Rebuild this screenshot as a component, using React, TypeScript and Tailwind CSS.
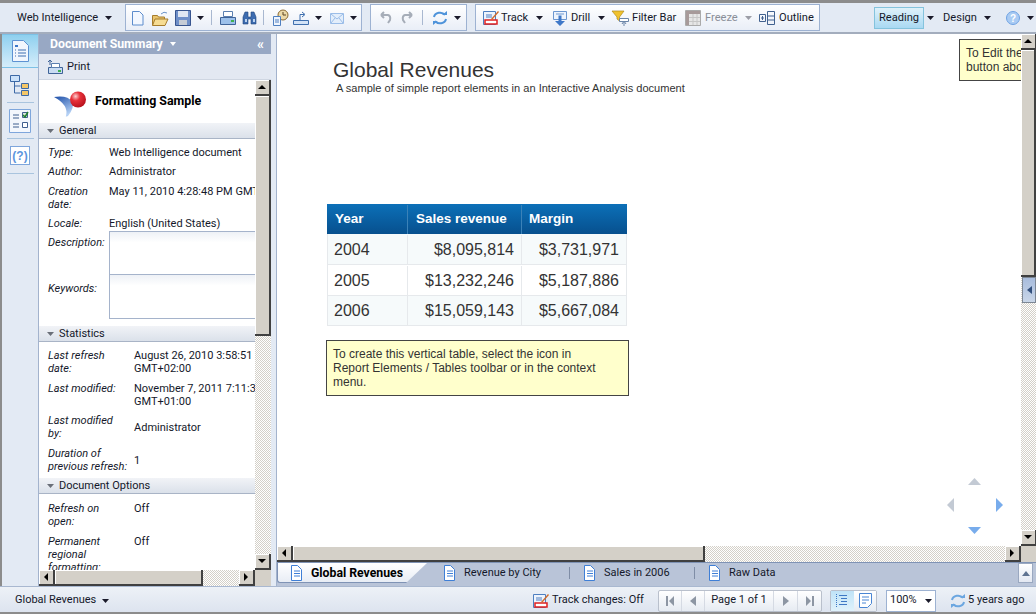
import type { ReactNode } from "react";

const Caret = ({ className = "mx-1" }: { className?: string }) => (
  <svg width="7" height="4" viewBox="0 0 7 4" className={`shrink-0 ${className}`}>
    <path d="M0 0h7L3.500 4z" fill="#1a1a2a" />
  </svg>
);

const Ico = ({ children, w = 18 }: { children: ReactNode; w?: number }) => (
  <svg width={w} height="18" viewBox={`0 0 ${w} 18`} className="shrink-0">
    {children}
  </svg>
);

const Gap = ({ className }: { className: string }) => <span className={`shrink-0 ${className}`} />;

const Sep = () => <div className="mx-[5px] h-[15px] w-px shrink-0 bg-[#a9b8d0]" />;

const DocIcon = () => (
  <Ico w={14}>
    <path d="M2.500 1.500h6l4 4v11h-10z" fill="#fff" stroke="#3f7fd6" />
    <path d="M5 7h6M5 9.500h6M5 12h6" stroke="#3f7fd6" />
  </Ico>
);

const TrackIcon = () => (
  <Ico>
    <path d="M1.500 2.500h12v13h-12z" fill="#eef4fd" stroke="#4e7fc0" />
    <path d="M4 6h6M4 8h6" stroke="#4e7fc0" />
    <path d="M3 11h12v4H3z" fill="#fff" stroke="#e02020" strokeWidth="1.500" />
    <path d="M9 10l7-8 1 1-7 8z" fill="#d06a2a" />
  </Ico>
);

const RefreshIcon = ({ color }: { color: string }) => (
  <Ico>
    <path d="M3 8a6 5 0 0 1 11-2M15 10a6 5 0 0 1-11 2" stroke={color} strokeWidth="2" fill="none" />
    <path d="M11 6h5V2zM7 12H2v4z" fill={color} />
  </Ico>
);

const Btn = ({ icon, label, gap, w, muted }: { icon: ReactNode; label: string; gap: string; w: string; muted?: boolean }) => (
  <div className={`flex shrink-0 items-center ${gap} ${muted ? "text-[#8a8f98]" : "text-[#14182a]"}`}>
    {icon}
    <span className={`whitespace-nowrap pt-px ${w}`}>{label}</span>
  </div>
);

const Toolbar = () => (
  <div className="flex h-[34px] shrink-0 items-center whitespace-nowrap border-t-[3px] border-b-2 border-t-[#8c8c8c] border-b-[#a3adbd] bg-[#e3eaf4] pl-[17px] text-[11.1px] text-[#14182a]">
    <span className="w-[82px] pt-px">Web Intelligence</span>
    <Caret className="ml-[6px] mr-[13px]" />
    <div className="flex h-[27px] w-[237px] shrink-0 items-center border border-[#9db2d2] bg-gradient-to-b from-white to-[#e9eef7] pl-[5px]">
      <Ico w={16}>
        <path d="M1.500 2.500h7l3.500 3.500v10h-10.500z" fill="#f2f7ff" stroke="#5c8ccc" />
      </Ico>
      <Gap className="w-[4px]" />
      <Ico>
        <path d="M1.500 6.500h5l1 1.500h6v8h-12z" fill="#e9c46d" stroke="#a67c2c" />
        <path d="M4 10h13l-3 6.500H1.500z" fill="#f6dc93" stroke="#a67c2c" />
        <path d="M10 5q3-3 6-1" stroke="#6b93c9" fill="none" />
      </Ico>
      <Gap className="w-[6px]" />
      <Ico w={16}>
        <path d="M.500 1.500h15v15h-15z" fill="#6f8fc8" stroke="#38558f" />
        <path d="M3 2h10v6H3z" fill="#dfe6f2" />
        <path d="M4 11h8v5H4z" fill="#c6ccd6" />
      </Ico>
      <Caret className="ml-[6px] mr-[2px]" />
      <Sep />
      <Gap className="w-[2px]" />
      <Ico>
        <path d="M4.500 2.500h9v5h-9z" fill="#fff" stroke="#5b7fb0" />
        <path d="M1.500 8.500h15v7h-15z" fill="#9cc0ea" stroke="#3f6398" />
        <path d="M12 11h3v2h-3z" fill="#3fb04f" />
      </Ico>
      <Gap className="w-[5px]" />
      <Ico w={15}>
        <path d="M1 8l2-5h3v5h3V3h3l2 5v7H9V10H6v5H1z" fill="#3d6cb0" stroke="#24477c" strokeWidth=".6" />
        <path d="M3 10h2v3H3zM11 10h2v3h-2z" fill="#b9d2f0" />
      </Ico>
      <Gap className="w-[1px]" />
      <Sep />
      <Gap className="w-[2px]" />
      <Ico>
        <circle cx="12" cy="6" r="5" fill="#ecd9a8" stroke="#8a6a33" />
        <path d="M12 3v3h3" stroke="#5a4520" fill="none" />
        <path d="M2.500 7.500h7v9h-7z" fill="#eef4fd" stroke="#4e7fc0" />
        <path d="M4 11h4M4 13h4" stroke="#4e7fc0" />
      </Ico>
      <Gap className="w-[3px]" />
      <Ico>
        <path d="M1.500 11.500h15v4h-15z" fill="#d3e3f7" stroke="#3f6fae" />
        <path d="M8 11V5.500h4M10 3l3 2.500L10 8" stroke="#3f6fae" fill="none" />
      </Ico>
      <Caret className="ml-[5px] mr-[6px]" />
      <Ico>
        <path d="M2.500 4.500h13v10h-13z" fill="#e3eefb" stroke="#9bbde8" />
        <path d="M3 5l6 5 6-5M3 14l4-5M15 14l-4-5" stroke="#9bbde8" fill="none" />
      </Ico>
      <Caret className="ml-[4px]" />
    </div>
    <div className="ml-[8px] flex h-[27px] w-[97px] shrink-0 items-center border border-[#9db2d2] bg-gradient-to-b from-white to-[#e9eef7] pl-[6px]">
      <Ico w={16}>
        <path d="M4 6h7q3 1 2 5l-2 3M4 6l3-3M4 6l3 3" stroke="#a6adb8" strokeWidth="2" fill="none" />
      </Ico>
      <Gap className="w-[7px]" />
      <Ico w={16}>
        <path d="M12 6H5q-3 1-2 5l2 3M12 6L9 3M12 6L9 9" stroke="#a6adb8" strokeWidth="2" fill="none" />
      </Ico>
      <Gap className="w-[1px]" />
      <Sep />
      <Gap className="w-[3px]" />
      <RefreshIcon color="#4e93da" />
      <Caret className="ml-[5px]" />
    </div>
    <div className="ml-[8px] flex h-[27px] w-[345px] shrink-0 items-center border border-[#9db2d2] bg-gradient-to-b from-white to-[#e9eef7] pl-[6px]">
      <Btn label="Track" gap="gap-[1px]" w="w-[28px]" icon={<TrackIcon />} />
      <Caret className="ml-[7px] mr-[9px]" />
      <Btn
        label="Drill"
        gap="gap-[1px]"
        w="w-[20px]"
        icon={
          <Ico>
            <path d="M1.500 2.500h13v8h-13z" fill="#eef4fd" stroke="#6c97d0" />
            <path d="M4 5h8" stroke="#6c97d0" />
            <path d="M6.500 6.500h3V12H13l-5 5-5-5h3.500z" fill="#3f78c8" />
          </Ico>
        }
      />
      <Caret className="ml-[7px] mr-[6px]" />
      <Btn
        label="Filter Bar"
        gap="gap-[3px]"
        w="w-[45px]"
        icon={
          <Ico>
            <path d="M1 2h12L8.500 8v4L6 10V8z" fill="#f0c22e" stroke="#b0891a" strokeWidth=".7" />
            <path d="M8.500 9.500h9v3h-9z" fill="#fff" stroke="#6b85a8" />
            <path d="M13 12v5M11 15l2-3 2 3" stroke="#6b85a8" fill="none" />
          </Ico>
        }
      />
      <Gap className="w-[8px]" />
      <Btn
        muted
        label="Freeze"
        gap="gap-[4px]"
        w="w-[33px]"
        icon={
          <Ico w={16}>
            <path d="M.500 1.500h15v15H.500z" fill="#e6e6e6" stroke="#aaa" />
            <path d="M1 2h14v3H1zM1 2h3v14H1z" fill="#a79a9a" />
            <path d="M4 8.500h11M4 12.500h11M8 5v11M12 5v11" stroke="#c6c6c6" />
          </Ico>
        }
      />
      <Caret className="ml-[7px] mr-[7px] opacity-40" />
      <Btn
        label="Outline"
        gap="gap-[2px]"
        w="w-[35px]"
        icon={
          <Ico>
            <path d="M.500 5.500h6v7h-6zM8.500 2.500h7v13h-7zM8.500 7h7M8.500 11h7M3.500 7v4M2 9h3" stroke="#41618f" fill="none" />
          </Ico>
        }
      />
    </div>
    <div className="ml-[54px] flex h-[22px] w-[50px] shrink-0 items-center justify-center border border-[#84c3dd] bg-gradient-to-b from-[#dff1fa] to-[#a9d9f2] pt-px">
      Reading
    </div>
    <Caret className="ml-[3px] mr-[9px]" />
    <span className="w-[33px] pt-px">Design</span>
    <Caret className="ml-[8px] mr-[15px]" />
    <svg width="14" height="14" viewBox="0 0 14 14" className="shrink-0">
      <circle cx="7" cy="7" r="6.500" fill="#a9cbf3" stroke="#6fa2e2" />
      <text x="7" y="11" textAnchor="middle" fontSize="10" fontWeight="bold" fill="#fff" fontFamily="Liberation Sans">?</text>
    </svg>
    <Caret className="ml-[7px]" />
  </div>
);

const Rail = () => (
  <div className="flex w-[39px] shrink-0 flex-col items-center border-l-2 border-l-[#8c8c8c] border-r border-r-[#a3b3cd] bg-[#e3eaf4]">
    <div className="flex h-[34px] w-full items-center justify-center border-y border-[#7cc1e6] bg-gradient-to-b from-[#8ed0ef] to-[#d5edfa]">
      <svg width="17" height="22" viewBox="0 0 17 22">
        <path d="M.500 .500h11l5 5v16H.500z" fill="#f1f6fd" stroke="#5d92d2" />
        <path d="M3 5h3v2H3z" fill="#3d78c8" />
        <path d="M3 10h1M6 10h8M3 13h1M6 13h8M3 16h1M6 16h8" stroke="#3d6fb0" />
      </svg>
    </div>
    <svg width="20" height="22" viewBox="0 0 20 22" className="mt-[7px]">
      <path d="M.500 .500h9v6h-9z" fill="#cbe2fa" stroke="#3c69a6" />
      <path d="M4.500 7v11h6M4.500 11h6" stroke="#3c69a6" fill="none" />
      <path d="M11.500 8.500h7v5h-7zM11.500 15.500h7v5h-7z" fill="#f4c768" stroke="#3c69a6" />
    </svg>
    <div className="mb-[6px] mt-[5px] h-px w-[27px] bg-[#a9c4de]" />
    <svg width="22" height="24" viewBox="0 0 22 24">
      <path d="M.500 .500h21v23H.500z" fill="#f3f7fd" stroke="#7ea6dc" />
      <path d="M4 6h6M4 9h6M4 15h6M4 18h6" stroke="#3f5f8f" />
      <path d="M13.500 3.500h5v5h-5z" fill="#d8e6d8" stroke="#3f5f8f" />
      <path d="M14 6l2 2 3-5" stroke="#1f7f2f" strokeWidth="1.500" fill="none" />
      <path d="M13.500 13.500h5v5h-5z" fill="#fff" stroke="#3f5f8f" />
    </svg>
    <div className="mb-[7px] mt-[5px] h-px w-[27px] bg-[#a9c4de]" />
    <div className="flex h-[19px] w-[20px] items-center justify-center border border-[#7ea6dc] bg-white font-['Liberation_Sans',sans-serif] text-[12px] font-bold text-[#5b95dd]">
      (?)
    </div>
    <div className="mt-[8px] h-px w-[27px] bg-[#a9c4de]" />
  </div>
);

const ScrollBtn = ({ dir }: { dir: "up" | "down" | "left" | "right" }) => {
  const d = { up: "M0 6L4 2l4 4z", down: "M0 2l4 4 4-4z", left: "M6 0v8L2 4z", right: "M2 0v8l4-4z" }[dir];
  return (
    <div className="flex h-[16px] w-[16px] shrink-0 items-center justify-center border-r-2 border-b-2 border-r-[#404040] border-b-[#404040] bg-[#d4d0c8] shadow-[inset_1px_1px_0_#fff]">
      <svg width="8" height="8" viewBox="0 0 8 8">
        <path d={d} fill="#000" />
      </svg>
    </div>
  );
};

const thumb = "border-r-2 border-b-2 border-r-[#404040] border-b-[#404040] bg-[#d4d0c8] shadow-[inset_1px_1px_0_#fff]";
const track = "bg-[repeating-conic-gradient(#d4d0c8_0_25%,#ffffff_0_50%)] bg-[length:2px_2px]";

const SectionHead = ({ label }: { label: string }) => (
  <div className="flex h-[16px] shrink-0 items-center border-b border-b-[#a9b4c6] bg-gradient-to-b from-[#f1f3f7] to-[#dbe1ea] pl-[8px] pt-px text-[#14182a]">
    <svg width="7" height="4" viewBox="0 0 7 4" className="mr-[5px]">
      <path d="M0 0h7L3.500 4z" fill="#6a6f78" />
    </svg>
    {label}
  </div>
);

const Row = ({ k, v, w, h }: { k: ReactNode; v: ReactNode; w: string; h: string }) => (
  <div className={`flex shrink-0 pl-[9px] ${h}`}>
    <div className={`shrink-0 italic leading-[13px] ${w}`}>{k}</div>
    <div className="whitespace-nowrap leading-[13px]">{v}</div>
  </div>
);

const Panel = () => (
  <div className="flex w-[232px] shrink-0 flex-col bg-white text-[11px] text-[#14182a]">
    <div className="flex h-[20px] shrink-0 items-center bg-[#98a8c4] pl-[11px] pr-[7px] text-[12.3px] font-bold text-white">
      <span>Document Summary</span>
      <svg width="6" height="4" viewBox="0 0 6 4" className="ml-[7px]">
        <path d="M0 0h6L3 4z" fill="#fff" />
      </svg>
      <span className="ml-auto text-[14px] leading-none">«</span>
    </div>
    <div className="flex h-[26px] shrink-0 items-center gap-[2px] border-b border-b-[#cfd6e2] bg-[#e3e8f2] pl-[8px]">
      <Ico>
        <path d="M1.500 9.500h14v6h-14z" fill="#c9dcf3" stroke="#3f6398" />
        <path d="M4.500 5.500h8v4h-8z" fill="#fff" stroke="#5b7fb0" />
        <path d="M11 12h3v2h-3z" fill="#3fb04f" />
        <path d="M3 7V2M1 4l2-2 2 2" stroke="#3f6398" fill="none" />
      </Ico>
      <span className="pt-px">Print</span>
    </div>
    <div className="flex min-h-0 flex-1">
      <div className="flex min-w-0 flex-1 flex-col overflow-hidden">
        <div className="flex h-[43px] shrink-0 items-center pl-[15px]">
          <svg width="36" height="34" viewBox="0 0 36 34">
            <defs>
              <radialGradient id="ball" cx="0.350" cy="0.300" r="0.800">
                <stop offset="0" stopColor="#fbd0d0" />
                <stop offset="0.350" stopColor="#e8313a" />
                <stop offset="1" stopColor="#b00d18" />
              </radialGradient>
              <linearGradient id="swoosh" x1="0" y1="0" x2="0.500" y2="1">
                <stop offset="0" stopColor="#1c4ea8" />
                <stop offset="1" stopColor="#b6d2f5" />
              </linearGradient>
            </defs>
            <path d="M0 12q14-2 18 5 3 5-4 14-3 1-2 0 3-11-12-19z" fill="url(#swoosh)" />
            <circle cx="24" cy="14.500" r="8" fill="url(#ball)" />
          </svg>
          <span className="ml-[5px] whitespace-nowrap text-[12.4px] font-bold text-black">Formatting Sample</span>
        </div>
        <SectionHead label="General" />
        <div className="flex h-[187px] shrink-0 flex-col pt-[7px]">
          <Row w="w-[61px]" h="h-[19px]" k="Type:" v="Web Intelligence document" />
          <Row w="w-[61px]" h="h-[20px]" k="Author:" v="Administrator" />
          <Row w="w-[61px]" h="h-[32px]" k={<>Creation<br />date:</>} v="May 11, 2010 4:28:48 PM GMT" />
          <Row w="w-[61px]" h="h-[14px]" k="Locale:" v="English (United States)" />
          <div className="flex h-[44px] shrink-0 pl-[9px]">
            <div className="w-[61px] shrink-0 pt-[5px] italic leading-[13px]">Description:</div>
            <div className="h-[44px] flex-1 border-y border-l border-[#a5b3cb] bg-gradient-to-b from-[#eef1f6] to-white to-[25%]" />
          </div>
          <div className="flex h-[44px] shrink-0 pl-[9px]">
            <div className="w-[61px] shrink-0 pt-[7px] italic leading-[13px]">Keywords:</div>
            <div className="h-[44px] flex-1 border-b border-l border-[#a5b3cb] bg-gradient-to-b from-[#eef1f6] to-white to-[25%]" />
          </div>
        </div>
        <SectionHead label="Statistics" />
        <div className="flex h-[136px] shrink-0 flex-col pt-[7px]">
          <Row w="w-[86px]" h="h-[33px]" k={<>Last refresh<br />date:</>} v={<>August 26, 2010 3:58:51 PM<br />GMT+02:00</>} />
          <Row w="w-[86px]" h="h-[32px]" k="Last modified:" v={<>November 7, 2011 7:11:33 PM<br />GMT+01:00</>} />
          <Row w="w-[86px]" h="h-[33px]" k={<>Last modified<br />by:</>} v={<span className="block pt-[7px]">Administrator</span>} />
          <Row w="w-[86px]" h="h-[31px]" k={<>Duration of<br />previous refresh:</>} v={<span className="block pt-[7px]">1</span>} />
        </div>
        <SectionHead label="Document Options" />
        <div className="flex flex-col pt-[8px]">
          <Row w="w-[86px]" h="h-[33px]" k={<>Refresh on<br />open:</>} v="Off" />
          <Row w="w-[86px]" h="h-[40px]" k={<>Permanent<br />regional<br />formatting:</>} v="Off" />
        </div>
      </div>
      <div className="flex w-[16px] shrink-0 flex-col">
        <ScrollBtn dir="up" />
        <div className={`h-[240px] ${thumb}`} />
        <div className={`flex-1 ${track}`} />
        <ScrollBtn dir="down" />
      </div>
    </div>
    <div className="flex h-[16px] shrink-0">
      <ScrollBtn dir="left" />
      <div className={`w-[148px] ${thumb}`} />
      <div className={`flex-1 ${track}`} />
      <ScrollBtn dir="right" />
      <div className="w-[16px] bg-[#d4d0c8]" />
    </div>
  </div>
);

const rows = [
  ["2004", "$8,095,814", "$3,731,971", "h-[31px] pt-[1px] bg-[#f6fafb]"],
  ["2005", "$13,232,246", "$5,187,886", "h-[31px] pt-[1px] bg-white"],
  ["2006", "$15,059,143", "$5,667,084", "h-[30px] bg-[#f6fafb]"],
];

const Report = () => (
  <div className="relative min-w-0 flex-1 overflow-hidden bg-white pl-[50px] pt-[24px] font-['Liberation_Sans',Arial,sans-serif] text-[#333]">
    <div className="pl-[6px] text-[21px] leading-[24px]">Global Revenues</div>
    <div className="pl-[9px] text-[11.05px] leading-[13px]">A sample of simple report elements in an Interactive Analysis document</div>
    <div className="mt-[109px] flex h-[30px] w-[300px] bg-gradient-to-b from-[#0c70b8] to-[#07508e] pt-[1px] text-[13.5px] font-bold text-white">
      <div className="flex w-[81px] items-center border-r border-r-[#3b82b8] pl-[8px]">Year</div>
      <div className="flex w-[114px] items-center border-r border-r-[#3b82b8] pl-[8px]">Sales revenue</div>
      <div className="flex flex-1 items-center pl-[7px]">Margin</div>
    </div>
    {rows.map(([y, s, m, cls]) => (
      <div key={y} className={`flex w-[300px] border-x border-b border-[#e6e9ec] text-[16px] ${cls}`}>
        <div className="flex w-[80px] items-center border-r border-r-[#e6e9ec] pl-[6px]">{y}</div>
        <div className="flex w-[114px] items-center justify-end border-r border-r-[#e6e9ec] pr-[7px]">{s}</div>
        <div className="flex flex-1 items-center justify-end pr-[7px]">{m}</div>
      </div>
    ))}
    <div className="-ml-px mt-[14px] h-[56px] w-[303px] border border-[#444] bg-[#ffffcc] py-[6px] pl-[6px] pr-[24px] text-[12px] leading-[14px]">
      To create this vertical table, select the icon in Report Elements / Tables toolbar or in the context menu.
    </div>
    <div className="absolute left-[682px] top-[5px] h-[42px] w-[80px] whitespace-nowrap border border-[#444] bg-[#ffffcc] py-[6px] pl-[6px] text-[12px] leading-[14px]">
      To Edit the report, click the
      <br />
      button above
    </div>
    <svg width="60" height="60" viewBox="0 0 60 60" className="absolute left-[668px] top-[443px]">
      <path d="M29.500 1l6.500 7H23z" fill="#c3cad4" />
      <path d="M9 21v14l-7-7z" fill="#c3cad4" />
      <path d="M51 21v14l7-7z" fill="#78acec" />
      <path d="M29.500 57l6.500-7H23z" fill="#78acec" />
    </svg>
  </div>
);

const Tab = ({ label, w, sep }: { label: string; w: string; sep?: string }) => (
  <div className="flex shrink-0 items-center">
    <DocIcon />
    <span className={`ml-[8px] whitespace-nowrap pt-px text-[#14182a] ${w}`}>{label}</span>
    {sep && <div className={`mr-[12px] h-[12px] w-px bg-[#7f8da6] ${sep}`} />}
  </div>
);

const Main = () => (
  <div className="flex min-w-0 flex-1 flex-col">
    <div className="flex min-h-0 flex-1">
      <div className="flex min-w-0 flex-1 flex-col">
        <Report />
        <div className="flex h-[16px] shrink-0">
          <ScrollBtn dir="left" />
          <div className={`w-[412px] ${thumb}`} />
          <div className={`flex-1 ${track}`} />
          <ScrollBtn dir="right" />
        </div>
      </div>
      <div className="relative flex w-[15px] shrink-0 flex-col">
        <ScrollBtn dir="up" />
        <div className={`h-[227px] ${thumb}`} />
        <div className={`flex-1 ${track}`} />
        <ScrollBtn dir="down" />
        <div className="h-[16px] bg-[#d4d0c8]" />
        <div className="absolute left-px top-[243px] flex h-[26px] w-[14px] items-center justify-center border border-[#7d8794] bg-gradient-to-b from-[#a8bcdc] to-[#c9d6e8]">
          <svg width="5" height="8" viewBox="0 0 5 8">
            <path d="M5 0v8L0 4z" fill="#33507d" />
          </svg>
        </div>
      </div>
    </div>
    <div className="flex h-[24px] shrink-0 items-start border-t border-t-[#7f93b5] bg-[#b9c4d8] text-[11px]">
      <div className="flex h-[20px] w-[150px] shrink-0 items-center rounded-bl-[3px] border-b border-l border-[#7f93b5] bg-gradient-to-b from-white to-[#e8edf5] pl-[11px] [clip-path:polygon(0_0,100%_0,86%_100%,0_100%)]">
        <DocIcon />
        <span className="ml-[8px] whitespace-nowrap pt-px text-[12.25px] font-bold text-black">Global Revenues</span>
      </div>
      <div className="ml-[15px] flex h-[20px] items-center">
        <Tab label="Revenue by City" w="w-[79px]" sep="ml-[26px]" />
        <Tab label="Sales in 2006" w="w-[65px]" sep="ml-[25px]" />
        <Tab label="Raw Data" w="w-[47px]" />
      </div>
      <div className="ml-auto mr-[3px] flex h-[20px] w-[15px] shrink-0 items-center justify-center border border-[#9aa8c0] bg-gradient-to-b from-white to-[#e3e8f2]">
        <svg width="8" height="5" viewBox="0 0 8 5">
          <path d="M0 5l4-5 4 5z" fill="#5f7391" />
        </svg>
      </div>
    </div>
  </div>
);

const StatusBar = () => (
  <div className="flex h-[28px] shrink-0 items-center whitespace-nowrap border-t border-b-2 border-t-[#a9b8d0] border-b-[#8c8c8c] bg-gradient-to-b from-[#edf1f7] to-[#dde4ef] pl-[15px] pt-[2px] text-[11px] text-[#14182a]">
    <span className="w-[81px]">Global Revenues</span>
    <Caret className="ml-[6px]" />
    <div className="ml-auto flex items-center">
      <TrackIcon />
      <span className="ml-[2px] w-[93px]">Track changes: Off</span>
      <div className="ml-[13px] flex h-[22px] w-[164px] items-center rounded-[2px] border border-[#b9c0cc] bg-gradient-to-b from-white to-[#e6ebf2]">
        <div className="flex h-full w-[23px] items-center justify-center border-r border-r-[#d5dae3]">
          <svg width="8" height="10" viewBox="0 0 8 10"><path d="M0 0h2v10H0zM8 0v10L3 5z" fill="#8d96a3" /></svg>
        </div>
        <div className="flex h-full w-[23px] items-center justify-center border-r border-r-[#d5dae3]">
          <svg width="6" height="10" viewBox="0 0 6 10"><path d="M6 0v10L0 5z" fill="#8d96a3" /></svg>
        </div>
        <div className="flex w-[68px] justify-center">Page 1 of 1</div>
        <div className="flex h-full w-[25px] items-center justify-center border-x border-x-[#d5dae3]">
          <svg width="6" height="10" viewBox="0 0 6 10"><path d="M0 0v10l6-5z" fill="#8d96a3" /></svg>
        </div>
        <div className="flex flex-1 items-center justify-center">
          <svg width="8" height="10" viewBox="0 0 8 10"><path d="M0 0v10l5-5zM6 0h2v10H6z" fill="#8d96a3" /></svg>
        </div>
      </div>
      <div className="ml-[8px] flex h-[22px] w-[47px] rounded-[2px] border border-[#b9c0cc]">
        <div className="flex w-[23px] items-center justify-center bg-gradient-to-b from-[#bfe3f7] to-[#e0f2fb]">
          <svg width="13" height="13" viewBox="0 0 13 13">
            <path d="M3 1.500h8M5 4.500h6M5 7.500h6M3 10.500h8" stroke="#3e78c4" />
            <path d="M.500 0v13" stroke="#3e78c4" strokeDasharray="1 1" />
          </svg>
        </div>
        <div className="flex flex-1 items-center justify-center bg-gradient-to-b from-white to-[#e6ebf2]">
          <svg width="13" height="15" viewBox="0 0 13 15">
            <path d="M.500 .500h12v10l-4 4h-8z" fill="#fff" stroke="#4a86d4" />
            <path d="M3 4h7M3 7h7M3 10h4" stroke="#4a86d4" />
          </svg>
        </div>
      </div>
      <div className="ml-[9px] flex h-[22px] w-[50px] items-center border border-[#9db2d2] bg-white pl-[3px]">
        <span>100%</span>
        <Caret className="ml-auto mr-[3px]" />
      </div>
      <div className="ml-[13px] mr-[11px] flex items-center gap-px">
        <RefreshIcon color="#6ba6e0" />
        <span className="w-[57px]">5 years ago</span>
      </div>
    </div>
  </div>
);

export default function App() {
  return (
    <div className="flex h-[614px] w-[1036px] flex-col overflow-hidden bg-[#e3eaf4] font-['Roboto',sans-serif]">
      <Toolbar />
      <div className="flex min-h-0 flex-1">
        <Rail />
        <Panel />
        <div className="w-[6px] shrink-0 border-r border-r-[#a3b3cd] bg-[#e3eaf4]" />
        <Main />
      </div>
      <StatusBar />
    </div>
  );
}
